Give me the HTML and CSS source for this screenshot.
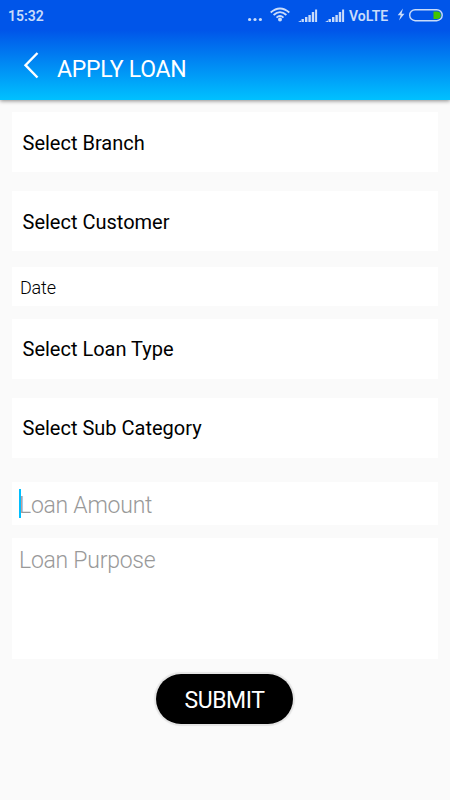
FILE: index.html
```html
<!DOCTYPE html>
<html lang="en">
<head>
  <meta charset="UTF-8">
  <meta name="viewport" content="width=device-width, initial-scale=1">
  <title>Apply Loan</title>
  <link rel="stylesheet" href="styles.css">
</head>
<body>

<header class="header">
  <div class="status-bar">
    <span class="time">15:32</span>
    <svg class="status-icons" width="101" height="20" viewBox="0 0 101 20">
      <g fill="#c9dcfa">
        <circle cx="1.600" cy="14.500" r="1.6"/>
        <circle cx="7" cy="14.500" r="1.6"/>
        <circle cx="12.400" cy="14.500" r="1.6"/>
        <circle cx="32" cy="14.500" r="2"/>
      </g>
      <g fill="none" stroke="#c9dcfa" stroke-width="1.8">
        <path d="M22.700 7.500Q32-.5 41.300 7.500"/>
        <path d="M25.600 10Q32 4.200 38.400 10"/>
        <path d="M28.500 12.600Q32 9.300 35.500 12.600"/>
      </g>
      <g id="signal" fill="#c9dcfa">
        <path d="M50 17l3-1.500V17zM53.500 17v-3h2.400v3zM57 17v-5h2.400v5zM60.400 17v-7h2.400v7zM63.800 17V7h2.400v10zM67.100 17V4.500h2V17z"/>
      </g>
      <use href="#signal" x="27"/>
    </svg>
    <span class="network">VoLTE</span>
    <svg class="battery" width="48" height="20" viewBox="0 0 48 20">
      <path d="M6 3.500L.7 10.200h3L2 15.500l5.500-6.800h-3z" fill="#c9dcfa"/>
      <rect x="12.700" y="4.700" width="32.500" height="11" rx="5.500" fill="none" stroke="#c9dcfa" stroke-width="1.400"/>
      <path d="M36.500 6.500H40a3.700 3.700 0 0 1 0 7.500h-3.500z" fill="#42c400"/>
    </svg>
  </div>
  <div class="title-bar">
    <svg class="back" width="16" height="28" viewBox="0 0 16 28">
      <path d="M14.500 2L2.500 14.200l12 12.300" fill="none" stroke="#fff" stroke-width="2.400"/>
    </svg>
    <h1>APPLY LOAN</h1>
  </div>
</header>

<form class="loan-form">
  <div class="select branch">Select Branch</div>
  <div class="select customer">Select Customer</div>
  <div class="date">Date</div>
  <div class="select loan-type">Select Loan Type</div>
  <div class="select sub-category">Select Sub Category</div>
  <div class="amount">
    <input class="field" type="text" placeholder="Loan Amount">
    <span class="cursor"></span>
  </div>
  <textarea class="field purpose" placeholder="Loan Purpose"></textarea>
  <button class="submit" type="button">SUBMIT</button>
</form>

</body>
</html>
```
FILE: styles.css
```css
* {
  box-sizing: border-box;
}
body {
  margin: 0;
  height: 100vh;
  background: #fafafa;
  font-family: Roboto, sans-serif;
  color: black;
  overflow: hidden;
}
.header {
  height: 100px;
  background: linear-gradient(#0055e9 0, #0055e9 30px, #00c1ff 100px);
  box-shadow: 0 1px 4px rgba(0, 0, 0, 0.45);
}
.status-bar {
  display: flex;
  height: 30px;
  padding: 5px 5px 0 8px;
  color: #c9dcfa;
  font-size: 14px;
  font-weight: 600;
  line-height: 22px;
}
.status-icons {
  margin-left: auto;
}
.network {
  width: 44px;
}
.battery {
  margin-left: 4px;
}
.title-bar {
  display: flex;
  align-items: flex-start;
  padding: 21px 0 0 23px;
}
h1 {
  margin: 5px 0 0 18px;
  color: white;
  font-size: 23px;
  font-weight: 400;
  letter-spacing: -0.25px;
  line-height: 28px;
}
.loan-form {
  display: flex;
  flex-direction: column;
  padding: 12px 12px 0;
}
.select {
  height: 60px;
  margin-bottom: 19px;
  padding-left: 10.5px;
  background: white;
  font-size: 20px;
  line-height: 62px;
}
.customer {
  margin-bottom: 16px;
}
.date {
  height: 39px;
  margin-bottom: 13px;
  padding-left: 8px;
  background: white;
  font-size: 18px;
  font-weight: 300;
  letter-spacing: -0.2px;
  line-height: 41px;
}
.loan-type,
.sub-category {
  line-height: 60px;
}
.sub-category {
  margin-bottom: 24px;
}
.amount {
  position: relative;
  height: 43px;
  margin-bottom: 13px;
}
.field {
  display: block;
  width: 100%;
  height: 100%;
  padding: 3px 7px 0;
  border: none;
  border-radius: 0;
  outline: none;
  background: white;
  font-family: inherit;
  font-size: 23px;
  font-weight: 300;
  letter-spacing: -0.25px;
}
.field::placeholder {
  color: #999;
}
.cursor {
  position: absolute;
  left: 7px;
  top: 7px;
  width: 2px;
  height: 29px;
  background: #00bfff;
}
.purpose {
  height: 121px;
  padding-top: 9px;
  line-height: 28px;
  resize: none;
}
.submit {
  align-self: center;
  width: 137px;
  height: 50px;
  margin: 15px 1px 0 0;
  padding: 2px 0 0;
  border: none;
  border-radius: 25px;
  background: black;
  box-shadow: 0 0 1px 2px #e4e4e4;
  color: white;
  font-family: inherit;
  font-size: 23px;
  letter-spacing: -0.4px;
}
```
